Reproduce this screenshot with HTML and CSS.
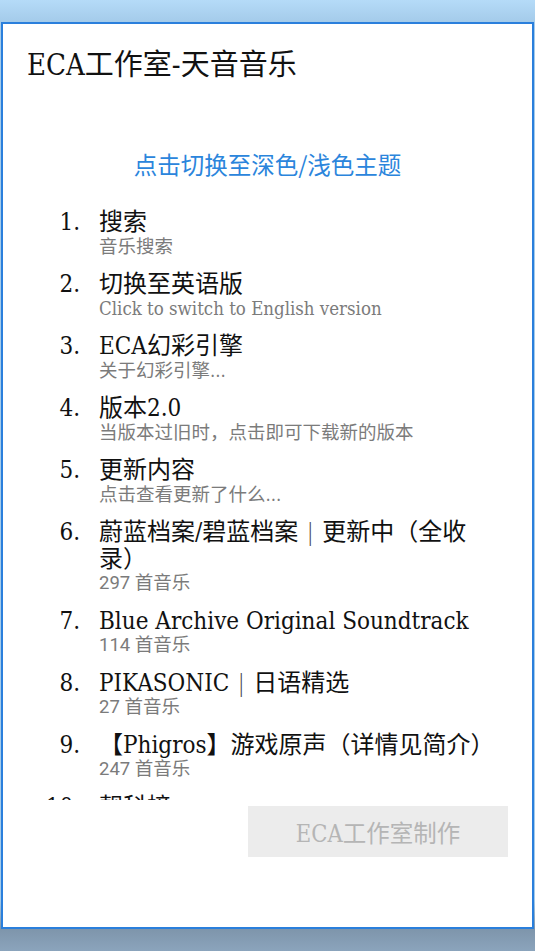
FILE: index.html
```html
<!DOCTYPE html>
<html lang="zh">
<head>
  <meta charset="UTF-8">
  <meta name="viewport" content="width=device-width, initial-scale=1.0">
  <title>ECA工作室-天音音乐</title>
  <link rel="stylesheet" href="styles.css">
</head>
<body>
<div class="window">
  <div class="title">ECA工作室-天音音乐</div>
  <a class="theme-toggle" href="#">点击切换至深色/浅色主题</a>
  <div class="list-wrap">
    <ol class="menu">
      <li>
        <div class="name">搜索</div>
        <div class="desc">音乐搜索</div>
      </li>
      <li>
        <div class="name">切换至英语版</div>
        <div class="desc">Click to switch to English version</div>
      </li>
      <li>
        <div class="name">ECA幻彩引擎</div>
        <div class="desc">关于幻彩引擎...</div>
      </li>
      <li>
        <div class="name">版本2.0</div>
        <div class="desc">当版本过旧时，点击即可下载新的版本</div>
      </li>
      <li>
        <div class="name">更新内容</div>
        <div class="desc">点击查看更新了什么...</div>
      </li>
      <li>
        <div class="name">蔚蓝档案/碧蓝档案<span class="sep">｜</span>更新中（全收录）</div>
        <div class="desc count">297 首音乐</div>
      </li>
      <li>
        <div class="name">Blue Archive Original Soundtrack</div>
        <div class="desc count">114 首音乐</div>
      </li>
      <li>
        <div class="name">PIKASONIC<span class="sep">｜</span>日语精选</div>
        <div class="desc count">27 首音乐</div>
      </li>
      <li>
        <div class="name">【Phigros】游戏原声（详情见简介）</div>
        <div class="desc count">247 首音乐</div>
      </li>
      <li>
        <div class="name">靓科榜</div>
        <div class="desc count">50 首音乐</div>
      </li>
    </ol>
  </div>
  <div class="footer">
    <button class="credit">ECA工作室制作</button>
  </div>
</div>
</body>
</html>
```

FILE: styles.css
```css
html {
  min-height: 100%;
  background: linear-gradient(to bottom, #b5dbf8 0, #a4cbea 22px, #a4cbea 900px, #7e95ab 929px, #8ba4bc 951px);
}
body {
  margin: 0;
  padding: 0;
  font-family: "DejaVu Serif Condensed", "DejaVu Serif", "Noto Sans CJK SC", serif;
  color: #111;
  overflow: hidden;
}
.window {
  box-sizing: border-box;
  width: 533px;
  height: 907px;
  margin: 22px 0 0 1px;
  background-color: #fff;
  border: 2px solid #2a7fdc;
  display: flex;
  flex-direction: column;
}
.title {
  font-size: 29px;
  line-height: 36px;
  padding: 23px 24px 0;
}
.theme-toggle {
  display: block;
  margin-top: 65px;
  font-family: "Noto Sans CJK SC", sans-serif;
  font-size: 23.5px;
  line-height: 32px;
  text-align: center;
  color: #2b85dc;
  text-decoration: none;
}
.list-wrap {
  margin-top: 29px;
  height: 591px;
  overflow: hidden;
  padding-right: 32px;
}
.menu {
  list-style: none;
  margin: 0;
  padding: 0;
  counter-reset: item;
}
.menu li {
  counter-increment: item;
  display: grid;
  grid-template-columns: 77px 1fr;
  column-gap: 19px;
  margin-bottom: 14px;
}
.menu li::before {
  content: counter(item) ".";
  grid-row: 1 / 3;
  text-align: right;
  font-size: 24px;
  line-height: 27px;
}
.name {
  font-size: 24px;
  line-height: 27px;
}
/* full-width bar keeps the CJK spacing around it */
.sep {
  font-family: "Noto Sans CJK SC", sans-serif;
  vertical-align: top;
  color: #444;
}
.desc {
  font-size: 18.5px;
  line-height: 21px;
  color: #7b7b7b;
}
.count {
  font-family: Roboto, "Noto Sans CJK SC", sans-serif;
}
.footer {
  display: flex;
  justify-content: flex-end;
  padding: 6px 24px 0;
}
.credit {
  width: 260px;
  height: 51px;
  border: none;
  background-color: #ececec;
  color: #b5b5b5;
  font-family: "DejaVu Serif Condensed", "DejaVu Serif", "Noto Sans CJK SC", serif;
  font-size: 23.5px;
  padding: 0;
}
```
